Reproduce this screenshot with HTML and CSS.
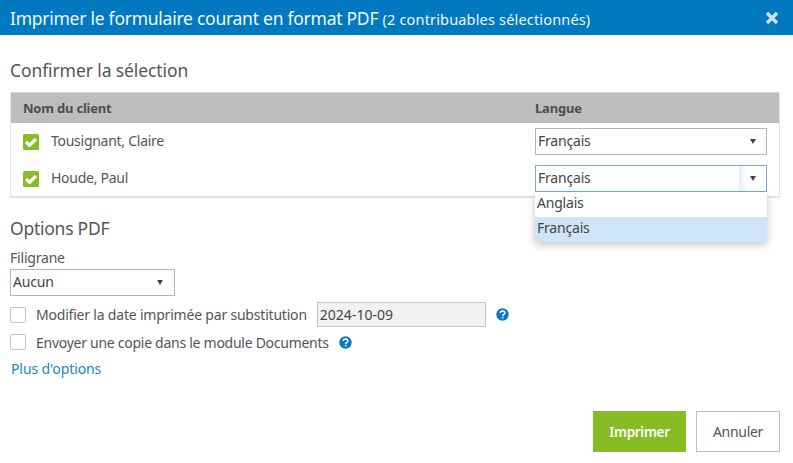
FILE: index.html
```html
<!DOCTYPE html>
<html lang="fr">
<head>
<meta charset="utf-8">
<title>Imprimer</title>
<link rel="stylesheet" href="styles.css">
</head>
<body>
<div class="dialog">
  <header class="titlebar">
    <h1 class="title">Imprimer le formulaire courant en format PDF <small class="subtitle">(2 contribuables sélectionnés)</small></h1>
    <svg class="close" width="14" height="14" viewBox="0 0 14 14"><path d="M2 2l10 10M12 2L2 12" stroke="#cfe4f3" stroke-width="3.2" fill="none"/></svg>
  </header>
  <main class="content">
    <h2 class="section first">Confirmer la sélection</h2>
    <div class="table">
      <div class="thead">
        <div class="col-name">Nom du client</div>
        <div class="col-lang">Langue</div>
      </div>
      <div class="row">
        <div class="col-name client">
          <svg class="check" width="16" height="16" viewBox="0 0 16 16"><rect width="16" height="16" rx="1.5" fill="#86bc24"/><path d="M3 8l3.6 3.2L13 5" stroke="#fff" stroke-width="3.2" fill="none"/></svg>
          <span>Tousignant, Claire</span>
        </div>
        <div class="col-lang">
          <div class="select wide"><span>Français</span><i class="caret"></i></div>
        </div>
      </div>
      <div class="row">
        <div class="col-name client">
          <svg class="check" width="16" height="16" viewBox="0 0 16 16"><rect width="16" height="16" rx="1.5" fill="#86bc24"/><path d="M3 8l3.6 3.2L13 5" stroke="#fff" stroke-width="3.2" fill="none"/></svg>
          <span>Houde, Paul</span>
        </div>
        <div class="col-lang">
          <div class="select wide focused"><span>Français</span><b class="caret-box"><i class="caret"></i></b></div>
          <ul class="menu">
            <li>Anglais</li>
            <li class="active">Français</li>
          </ul>
        </div>
      </div>
    </div>
    <h2 class="section second">Options PDF</h2>
    <div class="label">Filigrane</div>
    <div class="select narrow"><span>Aucun</span><i class="caret"></i></div>
    <div class="option opt-date">
      <span class="box"></span>
      <span class="opt-text">Modifier la date imprimée par substitution</span>
      <span class="date">2024-10-09</span>
      <svg class="help" width="13" height="13" viewBox="0 0 13 13"><circle cx="6.5" cy="6.5" r="6.2" fill="#0b78c0"/><path d="M4.3 5.1c0-1.3 1-2 2.3-2s2.2.7 2.2 1.8c0 1.600-2 1.500-2 3" stroke="#fff" stroke-width="1.5" fill="none"/><rect x="5.900" y="8.800" width="1.600" height="1.600" fill="#fff"/></svg>
    </div>
    <div class="option opt-docs">
      <span class="box"></span>
      <span class="opt-text">Envoyer une copie dans le module Documents</span>
      <svg class="help" width="13" height="13" viewBox="0 0 13 13"><circle cx="6.5" cy="6.5" r="6.2" fill="#0b78c0"/><path d="M4.3 5.1c0-1.3 1-2 2.3-2s2.2.7 2.2 1.8c0 1.600-2 1.500-2 3" stroke="#fff" stroke-width="1.5" fill="none"/><rect x="5.900" y="8.800" width="1.600" height="1.600" fill="#fff"/></svg>
    </div>
    <a class="more" href="#">Plus d'options</a>
    <div class="actions">
      <button class="btn primary" type="button">Imprimer</button>
      <button class="btn secondary" type="button">Annuler</button>
    </div>
  </main>
</div>
</body>
</html>
```
FILE: styles.css
```css
* { box-sizing: border-box; }
html, body { margin: 0; padding: 0; background: #fff; }
body { font-family: "Noto Sans", "Open Sans", sans-serif; font-size: 14px; color: #555; width: 793px; height: 463px; overflow: hidden; }
.titlebar { height: 35px; background: #0079c1; color: #f2f8fc; display: flex; align-items: center; justify-content: space-between; padding: 0 14px 0 10px; }
.title { margin: 0; font-size: 17.5px; font-weight: 400; letter-spacing: -0.26px; white-space: nowrap; }
.subtitle { font-size: 14.5px; letter-spacing: 0.17px; }
.close { display: block; }
.content { padding: 0 10px; }
.section { margin: 0; font-size: 17.5px; font-weight: 400; color: #555; line-height: 24px; letter-spacing: -0.1px; }
.section.first { padding-top: 23px; height: 57px; }
.section.second { padding-top: 18px; height: 43px; letter-spacing: -0.25px; }
.table { width: 770px; height: 106px; border: 1px solid #e3e3e3; border-top-color: #d8d8d8; border-bottom-width: 2px; }
.thead { height: 30px; background: #bdbdbd; display: flex; align-items: center; font-weight: 700; font-size: 13px; letter-spacing: -0.2px; color: #4d4d4d; }
.col-name { width: 524px; padding-left: 12px; }
.col-lang { position: relative; width: 243px; }
.row { display: flex; align-items: center; height: 37px; }
.client { display: flex; align-items: center; gap: 12px; letter-spacing: -0.27px; padding-bottom: 0; }
.client span { margin-top: -3px; }
.check { display: block; flex: none; }
.select { height: 27px; border: 1px solid #b5b5b5; background: #fff; display: flex; align-items: center; justify-content: space-between; padding: 0 10px 0 2px; color: #444; letter-spacing: -0.2px; }
.select span { margin-top: -2px; }
.wide { width: 232px; }
.narrow { width: 165px; margin-top: 1px; padding-right: 11px; }
.focused { border-color: #6fb0e4; padding-right: 0; }
.caret { display: block; width: 0; height: 0; border-left: 3.5px solid transparent; border-right: 3.5px solid transparent; border-top: 5px solid #444; }
.caret-box { width: 27px; height: 25px; display: flex; align-items: center; justify-content: center; background: linear-gradient(to right, #e4f0fa, #fff 8px); }
.menu { position: absolute; left: 0; top: 27px; width: 232px; margin: 0; padding: 0; list-style: none; background: #fff; box-shadow: 0 3px 8px rgba(0,0,0,.22); z-index: 2; color: #444; letter-spacing: -0.2px; }
.menu li { height: 25px; line-height: 22px; padding-left: 2px; }
.menu .active { background: #cfe4f6; }
.label { line-height: 20px; height: 20px; margin-top: 7px; letter-spacing: -0.2px; }
.option { display: flex; align-items: center; }
.opt-date { height: 29px; margin-top: 4px; letter-spacing: -0.2px; }
.opt-docs { height: 26px; letter-spacing: -0.27px; }
.box { width: 16px; height: 16px; border: 1px solid #c4c4c4; border-radius: 2px; background: #fff; flex: none; margin-right: 10px; }
.opt-text { white-space: nowrap; }
.date { width: 169px; height: 25px; margin-left: 10px; border: 1px solid #c4c4c4; background: #f2f2f2; padding-left: 2px; line-height: 23px; color: #444; letter-spacing: 0; }
.help { display: block; flex: none; margin-left: 10px; }
.more { display: block; margin: 1px 0 0 1px; line-height: 26px; color: #1c86c8; text-decoration: none; letter-spacing: -0.1px; }
.actions { display: flex; justify-content: flex-end; gap: 10px; margin-top: 29px; padding-right: 3px; }
.btn { height: 41px; font: inherit; cursor: pointer; }
.primary { width: 93px; background: #86bc24; border: 0; color: #fff; font-weight: 600; font-size: 13.5px; letter-spacing: -0.3px; }
.secondary { width: 84px; background: #fff; border: 1px solid #bdbdbd; color: #555; letter-spacing: -0.3px; }
```
